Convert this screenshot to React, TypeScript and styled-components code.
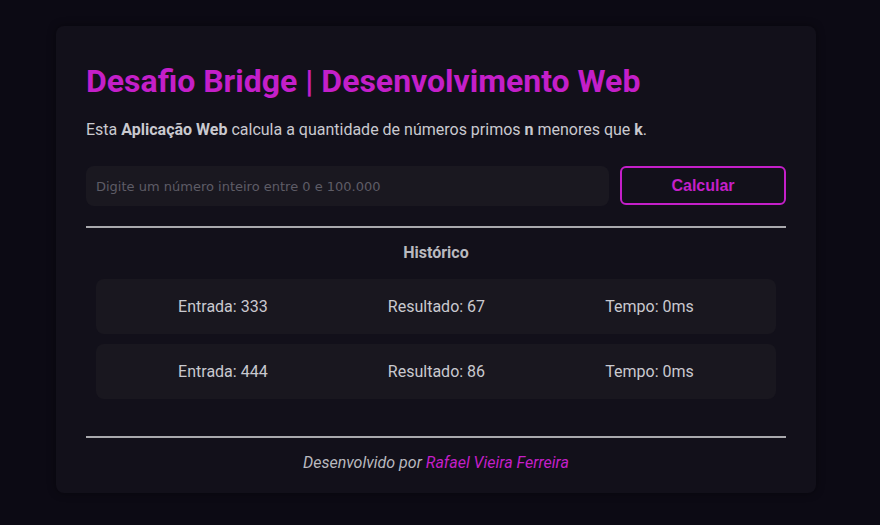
import React from "react";
import styled, { createGlobalStyle } from "styled-components";

const Global = createGlobalStyle`
  body { margin: 0; background: #0c0a14; font-family: Roboto, "Liberation Sans", sans-serif; }
  * { box-sizing: border-box; }
`;

const Page = styled.div`
  display: flex;
  justify-content: flex-start;
  align-items: flex-start;
  padding: 26px 0 26px 56px;
  min-height: 525px;
`;

const Card = styled.main`
  width: 760px;
  background: #12101a;
  border-radius: 8px;
  padding: 36px 30px 20px;
  box-shadow: 0 0 8px rgba(0,0,0,0.4);
`;

const Title = styled.h1`
  margin: 0 0 20px;
  font-size: 32px;
  font-weight: 700;
  color: #c41fc9;
  line-height: 38px;
`;

const Lead = styled.p`
  margin: 0 0 26px;
  font-size: 16px;
  color: #c9c9cf;
  line-height: 20px;
  b { font-weight: 700; }
`;

const Form = styled.form`
  display: flex;
  gap: 11px;
  align-items: flex-start;
`;

const Input = styled.input`
  flex: 1;
  height: 40px;
  border: none;
  border-radius: 8px;
  background: #1a1820;
  padding: 0 10px;
  font-family: "DejaVu Sans", sans-serif;
  font-size: 13px;
  color: #ddd;
  outline: none;
  &::placeholder { color: #5e5c66; }
`;

const Button = styled.button`
  width: 166px;
  height: 39px;
  border: 2px solid #c41fc9;
  border-radius: 6px;
  background: transparent;
  color: #c41fc9;
  font-family: "Liberation Sans", Arial, sans-serif;
  font-weight: 700;
  font-size: 16px;
`;

const Divider = styled.hr<{ $top: number }>`
  border: none;
  height: 2px;
  background: #a9a9ad;
  margin: ${(p) => p.$top}px 0 0;
`;

const HistoryTitle = styled.h2`
  margin: 15px 0 16px;
  text-align: center;
  font-size: 16px;
  font-weight: 700;
  color: #b9b9bf;
  line-height: 20px;
`;

const List = styled.div`
  display: flex;
  flex-direction: column;
  gap: 10px;
  padding: 0 10px;
`;

const Row = styled.div`
  display: flex;
  justify-content: space-around;
  align-items: center;
  height: 55px;
  padding: 0 22px;
  background: #19171f;
  border-radius: 8px;
  font-size: 16px;
  color: #c9c9cf;
`;

const Footer = styled.footer`
  margin-top: 15px;
  text-align: center;
  font-style: italic;
  font-size: 16px;
  color: #b9b9bf;
  line-height: 20px;
  a { color: #c41fc9; text-decoration: none; }
`;

const rows = [
  { n: 333, r: 67, t: 0 },
  { n: 444, r: 86, t: 0 },
];

export default function App() {
  return (
    <>
      <Global />
      <Page>
        <Card>
          <Title>Desafio Bridge | Desenvolvimento Web</Title>
          <Lead>
            Esta <b>Aplicação Web</b> calcula a quantidade de números primos <b>n</b> menores que <b>k</b>.
          </Lead>
          <Form onSubmit={(e) => e.preventDefault()}>
            <Input placeholder="Digite um número inteiro entre 0 e 100.000" />
            <Button type="submit">Calcular</Button>
          </Form>
          <Divider $top={20} />
          <HistoryTitle>Histórico</HistoryTitle>
          <List>
            {rows.map((r) => (
              <Row key={r.n}>
                <span>Entrada: {r.n}</span>
                <span>Resultado: {r.r}</span>
                <span>Tempo: {r.t}ms</span>
              </Row>
            ))}
          </List>
          <Divider $top={37} />
          <Footer>
            Desenvolvido por <a href="#">Rafael Vieira Ferreira</a>
          </Footer>
        </Card>
      </Page>
    </>
  );
}
